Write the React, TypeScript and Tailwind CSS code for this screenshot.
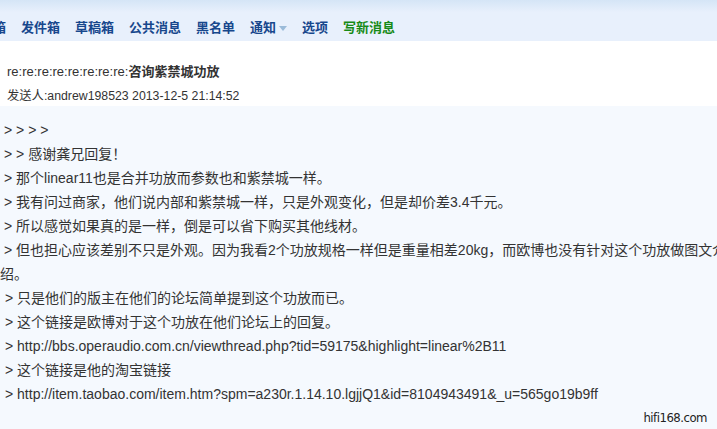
import React from 'react';

const navItems = [
  { label: '收件箱', cls: 'ml-[-33px]' },
  { label: '发件箱' },
  { label: '草稿箱' },
  { label: '公共消息' },
  { label: '黑名单' },
  { label: '通知', drop: true },
  { label: '选项' },
  { label: '写新消息', green: true },
];

const lines: { text: string; cls?: string }[] = [
  { text: '> > > >' },
  { text: '> > 感谢龚兄回复！' },
  { text: '> 那个linear11也是合并功放而参数也和紫禁城一样。' },
  { text: '> 我有问过商家，他们说内部和紫禁城一样，只是外观变化，但是却价差3.4千元。' },
  { text: '> 所以感觉如果真的是一样，倒是可以省下购买其他线材。' },
  { text: '> 但也担心应该差别不只是外观。因为我看2个功放规格一样但是重量相差20kg，而欧博也没有针对这个功放做图文介' },
  { text: '绍。', cls: 'pl-0' },
  { text: '> 只是他们的版主在他们的论坛简单提到这个功放而已。', cls: 'pl-[5px]' },
  { text: '> 这个链接是欧博对于这个功放在他们论坛上的回复。', cls: 'pl-[5px]' },
  { text: '> http://bbs.operaudio.com.cn/viewthread.php?tid=59175&highlight=linear%2B11', cls: 'pl-[5px]' },
  { text: '> 这个链接是他的淘宝链接', cls: 'pl-[5px]' },
  { text: '> http://item.taobao.com/item.htm?spm=a230r.1.14.10.lgjjQ1&id=8104943491&_u=565go19b9ff', cls: 'pl-[5px]' },
];

export default function App() {
  return (
    <div
      className="relative w-[717px] h-[429px] overflow-hidden bg-white text-[#333]"
      style={{ fontFamily: '"Liberation Sans", Arial, "Noto Sans CJK SC", sans-serif' }}
    >
      {/* top nav bar */}
      <div className="h-[41px] bg-gradient-to-b from-[#d5e5f6] via-[#e8f0fc] via-30% to-[#e8f0fc] flex items-end pb-[5px] gap-[15px] whitespace-nowrap">
        {navItems.map((n) => (
          <span
            key={n.label}
            className={`flex items-center text-[13px] leading-[16px] font-bold ${n.green ? 'text-[#178a17]' : 'text-[#17478c]'} ${n.cls ?? ''}`}
          >
            {n.label}
            {n.drop && (
              <svg width="8" height="5" viewBox="0 0 8 5" className="ml-[3px] mt-[1px]">
                <path d="M0 0 L8 0 L4 5 Z" fill="#9bbbd9" />
              </svg>
            )}
          </span>
        ))}
      </div>

      {/* subject + sender */}
      <div className="h-[65px] pl-[7px] pt-[23px]">
        <div className="text-[13px] leading-[16px] whitespace-nowrap">
          <span>re:re:re:re:re:re:re:re:</span>
          <span className="font-bold">咨询紫禁城功放</span>
        </div>
        <div className="mt-[8px] text-[12.3px] leading-[16px] whitespace-nowrap">
          发送人:andrew198523 2013-12-5 21:14:52
        </div>
      </div>

      {/* message body */}
      <div className="h-[323px] bg-[#f5f9fe] pt-[12px]">
        {lines.map((l, i) => (
          <div key={i} className={`h-[24px] leading-[24px] text-[14px] whitespace-nowrap ${l.cls ?? 'pl-[4px]'}`}>
            {l.text}
          </div>
        ))}
      </div>

      <div
        className="absolute right-[10px] bottom-[2px] text-[13px] text-[#222] tracking-[-0.5px]"
        style={{ fontFamily: '"Liberation Sans Narrow", "DejaVu Sans Condensed", sans-serif' }}
      >
        hifi168.com
      </div>
    </div>
  );
}
